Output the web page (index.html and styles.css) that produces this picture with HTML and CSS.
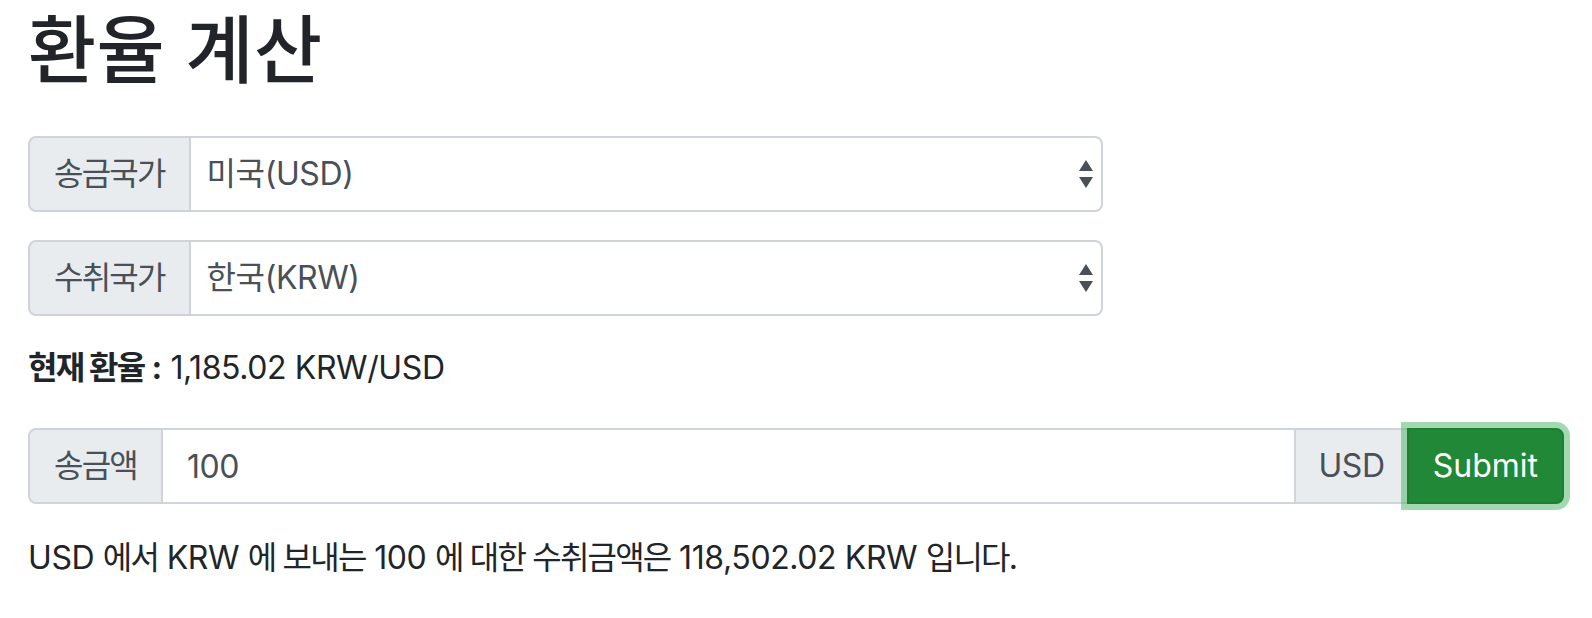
FILE: index.html
```html
<!DOCTYPE html>
<html lang="ko">
<head>
<meta charset="utf-8">
<title>환율 계산</title>
<link rel="stylesheet" href="styles.css">
</head>
<body>
<div class="container">
  <h1 class="title">환율 계산</h1>
  <form class="form">
    <div class="input-group">
      <span class="addon addon-left ko">송금국가</span>
      <div class="select-wrap">
        <select class="control select">
          <option>미국(USD)</option>
        </select>
        <svg class="arrows" width="14" height="28" viewBox="0 0 14 28"><path d="M7 0L14 11H0Z M7 28L0 17H14Z" fill="#495057"/></svg>
      </div>
    </div>
    <div class="input-group">
      <span class="addon addon-left ko">수취국가</span>
      <div class="select-wrap">
        <select class="control select">
          <option>한국(KRW)</option>
        </select>
        <svg class="arrows" width="14" height="28" viewBox="0 0 14 28"><path d="M7 0L14 11H0Z M7 28L0 17H14Z" fill="#495057"/></svg>
      </div>
    </div>
    <p class="rate"><b><span class="ko">현재 환율</span> :</b> 1,185.02 KRW/USD</p>
    <div class="input-group wide">
      <span class="addon addon-left ko">송금액</span>
      <input class="control amount" type="text" value="100">
      <span class="addon addon-mid">USD</span>
      <button class="btn-submit" type="button">Submit</button>
    </div>
    <p class="result">USD <span class="ko">에서</span> KRW <span class="ko">에 보내는</span> 100 <span class="ko">에 대한 수취금액은</span> 118,502.02 KRW <span class="ko">입니다.</span></p>
  </form>
</div>
</body>
</html>
```

FILE: styles.css
```css
* { box-sizing: border-box; }
html, body {
  margin: 0;
  background: #fff;
}
body {
  font-family: "Inter", "Noto Sans CJK KR", sans-serif;
  font-size: 32px;
  line-height: 48px;
  letter-spacing: -0.4px;
  color: #212529;
}
.ko {
  letter-spacing: -1.8px;
}
.container {
  width: 1592px;
  padding: 0 28px;
}
.title {
  margin: 0;
  padding-top: 2px;
  font-size: 74px;
  line-height: 96px;
  font-weight: 500;
  letter-spacing: 0.5px;
  height: 120px;
}
.form {
  padding-top: 16px;
}
.input-group {
  display: flex;
  align-items: stretch;
  width: 1075px;
  height: 76px;
  margin-bottom: 28px;
}
.input-group.wide { width: 1536px; }
.addon {
  display: flex;
  align-items: center;
  padding: 0 24px;
  background: #e9ecef;
  border: 2px solid #ced4da;
  color: #495057;
  white-space: nowrap;
  font-size: 32px;
}
.addon-left {
  border-radius: 8px 0 0 8px;
}
.addon-mid {
  margin-left: -2px;
  border-radius: 0;
  padding: 0 22px;
}
.select-wrap {
  position: relative;
  flex: 1;
  display: flex;
  margin-left: -2px;
}
.control {
  flex: 1;
  min-width: 0;
  height: 76px;
  font: inherit;
  letter-spacing: inherit;
  color: #495057;
  background: #fff;
  border: 2px solid #ced4da;
  border-radius: 0 8px 8px 0;
  padding: 0 24px 0 16px;
  outline: none;
}
.select {
  -webkit-appearance: none;
  appearance: none;
}
.arrows {
  position: absolute;
  right: 10px;
  top: 24px;
  pointer-events: none;
}
.amount {
  margin-left: -2px;
  border-radius: 0;
  padding-left: 24px;
}
.rate {
  margin: 2px 0 36px;
}
.btn-submit {
  font: inherit;
  letter-spacing: 0;
  color: #fff;
  background: #218838;
  border: 2px solid #1e7e34;
  border-radius: 0 8px 8px 0;
  padding: 0 24px;
  margin-left: -2px;
  box-shadow: 0 0 0 6px rgba(72, 180, 97, 0.5);
  position: relative;
  z-index: 1;
}
.result {
  margin: 30px 0 0;
}
```
